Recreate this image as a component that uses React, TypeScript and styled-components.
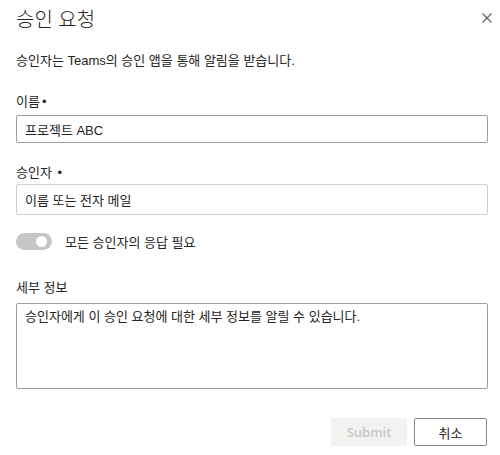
import styled, { createGlobalStyle } from 'styled-components';

const GlobalStyle = createGlobalStyle`
  body {
    margin: 0;
    background: #ffffff;
    font-family: "Liberation Sans", "Noto Sans CJK KR", sans-serif;
    color: #252423;
  }
`;

const Dialog = styled.div`
  width: 500px;
  height: 455px;
  box-sizing: border-box;
  padding: 6px 12px 0 16px;
  display: flex;
  flex-direction: column;
`;

const Header = styled.div`
  display: flex;
  align-items: center;
  justify-content: space-between;
  height: 28px;
`;

const Title = styled.h1`
  margin: 0;
  font-size: 20px;
  line-height: 28px;
  font-weight: 300;
  color: #252423;
`;

const CloseButton = styled.button`
  border: none;
  background: transparent;
  padding: 0;
  margin-right: -5px;
  margin-top: -4px;
  width: 12px;
  height: 12px;
  display: flex;
  align-items: center;
  justify-content: center;
  cursor: pointer;
`;

const Subtitle = styled.p`
  margin: 18px 0 0;
  font-size: 13px;
  line-height: 18px;
`;

const Field = styled.div<{ $top: number }>`
  margin-top: ${(p) => p.$top}px;
  display: flex;
  flex-direction: column;
`;

const Label = styled.label<{ $gap: number }>`
  font-size: 13px;
  line-height: 18px;
  margin-bottom: ${(p) => p.$gap}px;
`;

const Required = styled.span`
  margin-left: 2px;
`;

const Input = styled.div<{ $height: number; $strong?: boolean }>`
  height: ${(p) => p.$height}px;
  box-sizing: border-box;
  border: 1px solid ${(p) => (p.$strong ? '#a19f9d' : '#d2d0ce')};
  border-radius: 2px;
  padding: 0 8px;
  display: flex;
  align-items: center;
  font-size: 13px;
`;

const TextArea = styled.div`
  height: 86px;
  box-sizing: border-box;
  border: 1px solid #a19f9d;
  border-radius: 2px;
  padding: 4px 8px;
  font-size: 13px;
  line-height: 18px;
`;

const ToggleRow = styled.div`
  margin-top: 16px;
  height: 20px;
  display: flex;
  align-items: center;
  gap: 13px;
  font-size: 13px;
`;

const Toggle = styled.span`
  position: relative;
  width: 36px;
  height: 17px;
  border-radius: 9px;
  background: #c8c6c4;
  display: inline-block;
`;

const Knob = styled.span`
  position: absolute;
  right: 5px;
  top: 3px;
  width: 11px;
  height: 11px;
  border-radius: 50%;
  background: #ffffff;
`;

const Footer = styled.div`
  margin-top: 29px;
  display: flex;
  justify-content: flex-end;
  gap: 7px;
  padding-right: 1px;
`;

const Button = styled.button<{ $primary?: boolean }>`
  height: 28px;
  box-sizing: border-box;
  border-radius: 2px;
  font-size: 13px;
  font-family: "Open Sans", "Noto Sans CJK KR", sans-serif;
  ${(p) =>
    p.$primary
      ? `
    width: 76px;
    border: none;
    background: #f3f2f1;
    color: #c8c6c4;
    font-weight: 600;
  `
      : `
    width: 73px;
    border: 1px solid #8a8886;
    background: #ffffff;
    color: #252423;
    font-weight: 400;
  `}
`;

export default function App() {
  return (
    <>
      <GlobalStyle />
      <Dialog>
        <Header>
          <Title>승인 요청</Title>
          <CloseButton aria-label="닫기">
            <svg width="10" height="10" viewBox="0 0 10 10">
              <path d="M0.5 0.5 L9.5 9.5 M9.5 0.5 L0.5 9.5" stroke="#605e5c" strokeWidth="1.1" />
            </svg>
          </CloseButton>
        </Header>
        <Subtitle>승인자는 Teams의 승인 앱을 통해 알림을 받습니다.</Subtitle>
        <Field $top={23}>
          <Label $gap={4}>
            이름<Required>•</Required>
          </Label>
          <Input $height={28} $strong>
            프로젝트 ABC
          </Input>
        </Field>
        <Field $top={21}>
          <Label $gap={2}>
            승인자 <Required>•</Required>
          </Label>
          <Input $height={31}>이름 또는 전자 메일</Input>
        </Field>
        <ToggleRow>
          <Toggle>
            <Knob />
          </Toggle>
          모든 승인자의 응답 필요
        </ToggleRow>
        <Field $top={28}>
          <Label $gap={6}>세부 정보</Label>
          <TextArea>승인자에게 이 승인 요청에 대한 세부 정보를 알릴 수 있습니다.</TextArea>
        </Field>
        <Footer>
          <Button $primary disabled>
            Submit
          </Button>
          <Button>취소</Button>
        </Footer>
      </Dialog>
    </>
  );
}
